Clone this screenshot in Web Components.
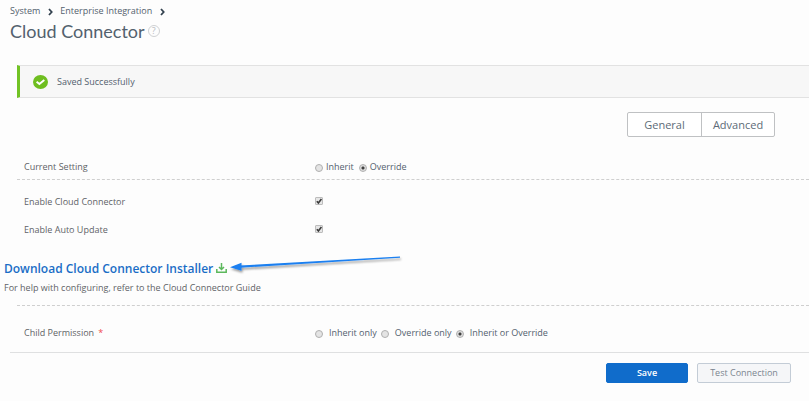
<!DOCTYPE html>
<html lang="en">
<head>
<meta charset="utf-8">
<title>Cloud Connector</title>
<style>
  body {
    margin: 0;
    background: #fdfdfd;
    color: #5f6367;
    font-family: "Open Sans", "Noto Sans", sans-serif;
    font-size: 9px;
    line-height: 12px;
  }
</style>
</head>
<body>
<connector-page></connector-page>

<script>
const crumbTemplate = document.createElement("template");
crumbTemplate.innerHTML = `
  <style>
    :host {
      display: flex;
      align-items: center;
      gap: 8px;
    }
    a {
      color: #53616e;
      text-decoration: none;
    }
    svg {
      display: block;
      margin-top: 2px;
    }
  </style>
  <a href="#"><slot></slot></a>
  <svg width="5" height="8" viewBox="0 0 5 8"><path d="M1 1l2.7 3L1 7" fill="none" stroke="#33424f" stroke-width="1.8"/></svg>
`;

class NavCrumb extends HTMLElement {
  constructor() {
    super();
    this.attachShadow({ mode: "open" });
    this.shadowRoot.appendChild(crumbTemplate.content.cloneNode(true));
  }
}

const bannerTemplate = document.createElement("template");
bannerTemplate.innerHTML = `
  <style>
    :host {
      display: flex;
      align-items: center;
      gap: 9px;
      box-sizing: border-box;
      height: 33px;
      padding-left: 13px;
      background: #f7f7f7;
      border: solid #e2e2e2;
      border-width: 1px 0;
      border-left: 3px solid #72c325;
      color: #53616e;
    }
    svg {
      display: block;
    }
  </style>
  <svg width="15" height="14" viewBox="0 0 15 14">
    <ellipse cx="7.5" cy="7" rx="7.5" ry="7" fill="#6fbe20"/>
    <path d="M3.6 6.7l2.8 2.3 4.9-4.1" fill="none" stroke="#fff" stroke-width="1.9"/>
  </svg>
  <span role="status"><slot></slot></span>
`;

class StatusBanner extends HTMLElement {
  constructor() {
    super();
    this.attachShadow({ mode: "open" });
    this.shadowRoot.appendChild(bannerTemplate.content.cloneNode(true));
  }
}

const tabsTemplate = document.createElement("template");
tabsTemplate.innerHTML = `
  <style>
    :host {
      display: flex;
      border: 1px solid #bfc1c3;
      border-radius: 2px;
      background: #fff;
    }
    button {
      all: unset;
      box-sizing: border-box;
      width: 73px;
      height: 23px;
      color: #5d6b77;
      font-size: 11px;
      line-height: 23px;
      text-align: center;
      cursor: pointer;
    }
    button + button {
      border-left: 1px solid #bfc1c3;
    }
  </style>
`;

class TabSwitch extends HTMLElement {
  constructor() {
    super();
    this.attachShadow({ mode: "open" });
    this.shadowRoot.appendChild(tabsTemplate.content.cloneNode(true));
    this.tabs.forEach((name) => {
      const button = document.createElement("button");
      button.type = "button";
      button.textContent = name;
      this.shadowRoot.appendChild(button);
    });
  }

  get tabs() {
    return this.getAttribute("tabs").split(",");
  }
}

const rowTemplate = document.createElement("template");
rowTemplate.innerHTML = `
  <style>
    :host {
      display: grid;
      grid-template-columns: 291px 1fr;
      align-items: center;
      height: var(--row-height, 28px);
      padding-left: 7px;
    }
    .required {
      color: #f0484e;
      margin-left: 4px;
    }
  </style>
  <span><label for="first"></label><span class="required">*</span></span>
`;

/**
 * Base for the rows of the form: a label and its controls
 */
class FormRow extends HTMLElement {
  constructor() {
    super();
    this.attachShadow({ mode: "open" });
    this.shadowRoot.appendChild(rowTemplate.content.cloneNode(true));
    this.shadowRoot.querySelector("label").textContent = this.getAttribute("label");
    if (!this.hasAttribute("required")) {
      this.shadowRoot.querySelector(".required").remove();
    }
  }
}

const checkTemplate = document.createElement("template");
checkTemplate.innerHTML = `
  <style>
    .box {
      display: grid;
      width: 8px;
      height: 8px;
      margin-bottom: 2px;
    }
    input, svg {
      grid-area: 1 / 1;
    }
    input {
      appearance: none;
      box-sizing: border-box;
      width: 8px;
      height: 8px;
      margin: 0;
      border: 1px solid #bcbcbc;
      border-radius: 1px;
      background: #e6e6e6;
    }
    svg {
      pointer-events: none;
      visibility: hidden;
    }
    input:checked + svg {
      visibility: visible;
    }
  </style>
  <span class="box">
    <input type="checkbox" id="first" checked>
    <svg width="8" height="8" viewBox="0 0 8 8"><path d="M1.8 4.2l1.6 1.7 3-4" fill="none" stroke="#3c3c3c" stroke-width="1.6"/></svg>
  </span>
`;

class CheckRow extends FormRow {
  constructor() {
    super();
    this.shadowRoot.appendChild(checkTemplate.content.cloneNode(true));
  }
}

const radioTemplate = document.createElement("template");
radioTemplate.innerHTML = `
  <style>
    .options {
      display: flex;
      gap: var(--option-gap, 5px);
    }
    .options label {
      display: flex;
      align-items: center;
      gap: var(--radio-gap, 3px);
      color: #53616e;
    }
    input {
      appearance: none;
      box-sizing: border-box;
      width: 8px;
      height: 8px;
      margin: 2px 0 0 0;
      border: 1px solid #b0b0b0;
      border-radius: 50%;
      background: #e4e4e4;
    }
    input:checked {
      background: radial-gradient(circle, #3f3f3f 1px, #dcdcdc 2px);
    }
  </style>
  <div class="options"></div>
`;

class RadioRow extends FormRow {
  constructor() {
    super();
    this.shadowRoot.appendChild(radioTemplate.content.cloneNode(true));
    this.initializeOptions();
  }

  initializeOptions() {
    const optionsEle = this.shadowRoot.querySelector(".options");
    this.options.forEach((option, index) => {
      const label = document.createElement("label");
      const input = document.createElement("input");
      input.type = "radio";
      input.name = "choice";
      input.checked = option === this.getAttribute("value");
      if (index === 0) {
        input.id = "first";
      }
      label.append(input, option);
      optionsEle.appendChild(label);
    });
  }

  get options() {
    return this.getAttribute("options").split(",");
  }
}

const downloadTemplate = document.createElement("template");
downloadTemplate.innerHTML = `
  <style>
    :host {
      display: block;
    }
    .line {
      display: flex;
      align-items: center;
      height: 22px;
    }
    a {
      display: flex;
      align-items: center;
      gap: 3px;
      color: #1a6dc6;
      font-size: 12px;
      font-weight: 600;
      line-height: 16px;
      text-decoration: none;
    }
    svg {
      display: block;
    }
    .pointer {
      margin-left: 3px;
      overflow: visible;
    }
    p {
      margin: 2px 0 0;
    }
  </style>
  <div class="line">
    <a href="#"><slot></slot>
      <svg width="11" height="12" viewBox="0 0 11 12"><path d="M5.5 0v6M3 4l2.5 2.5L8 4M.8 6v3.2h9.4V6" fill="none" stroke="#5cb85c" stroke-width="1.5"/></svg>
    </a>
    <svg class="pointer" width="174" height="22" viewBox="0 2 174 22" aria-hidden="true">
      <defs><filter id="shade" x="-5%" y="-40%" width="110%" height="200%"><feDropShadow dx="1" dy="2" stdDeviation="1" flood-color="#000" flood-opacity=".4"/></filter></defs>
      <g filter="url(#shade)" fill="#1a7ff0">
        <path d="M10 9.6L170 0.4v1.4L10 11.7z"/>
        <path d="M0 11.3l11.5-4.6v8z"/>
      </g>
    </svg>
  </div>
  <p><slot name="help"></slot></p>
`;

class DownloadLink extends HTMLElement {
  constructor() {
    super();
    this.attachShadow({ mode: "open" });
    this.shadowRoot.appendChild(downloadTemplate.content.cloneNode(true));
  }
}

const actionTemplate = document.createElement("template");
actionTemplate.innerHTML = `
  <style>
    :host {
      display: block;
    }
    button {
      box-sizing: border-box;
      width: 94px;
      height: 20px;
      padding: 0;
      border: 1px solid #c3ccd6;
      border-radius: 2px;
      background: #f5f6f8;
      color: #7b858f;
      font: inherit;
    }
    :host([primary]) button {
      width: 82px;
      border-color: #106ccb;
      background: #106ccb;
      color: #fff;
      font-weight: 600;
    }
  </style>
  <button type="button"><slot></slot></button>
`;

class ActionButton extends HTMLElement {
  constructor() {
    super();
    this.attachShadow({ mode: "open" });
    this.shadowRoot.appendChild(actionTemplate.content.cloneNode(true));
  }
}

const pageTemplate = document.createElement("template");
pageTemplate.innerHTML = `
  <style>
    :host {
      display: block;
    }
    header {
      padding: 5px 10px 0;
    }
    nav {
      display: flex;
      gap: 7px;
    }
    .title {
      display: flex;
      align-items: center;
      gap: 3px;
      height: 28px;
      margin-bottom: 20px;
    }
    h1 {
      margin: 0;
      color: #53616e;
      font-family: Lato, "Open Sans", sans-serif;
      font-size: 18px;
      font-weight: 400;
      line-height: 28px;
    }
    .help {
      box-sizing: border-box;
      width: 12px;
      height: 12px;
      padding: 0;
      border: 1px solid #cfd1d3;
      border-radius: 50%;
      background: none;
      color: #b9bcbf;
      font: inherit;
      line-height: 10px;
    }
    .panel {
      margin-left: 17px;
    }
    .tabs {
      display: flex;
      justify-content: flex-end;
      padding: 14px 34px 18px 0;
    }
    .current {
      --row-height: 24px;
    }
    .settings {
      padding: 8px 0;
      border-top: 1px dashed #cfcfcf;
    }
    download-link {
      padding: 6px 0 11px 4px;
    }
    .permission {
      padding: 13px 0 5px;
      border-top: 1px dashed #cfcfcf;
      --option-gap: 4px;
      --radio-gap: 6px;
    }
    footer {
      display: flex;
      justify-content: flex-end;
      gap: 9px;
      margin-left: 10px;
      padding: 10px 18px 18px 0;
      border-top: 1px solid #dfe0e1;
    }
  </style>
  <header>
    <nav>
      <nav-crumb>System</nav-crumb>
      <nav-crumb>Enterprise Integration</nav-crumb>
    </nav>
    <div class="title">
      <h1>Cloud Connector</h1>
      <button class="help" type="button">?</button>
    </div>
  </header>
  <main>
    <div class="panel">
      <status-banner>Saved Successfully</status-banner>
      <div class="tabs"><tab-switch tabs="General,Advanced"></tab-switch></div>
      <radio-row class="current" label="Current Setting" options="Inherit,Override" value="Override"></radio-row>
      <div class="settings">
        <check-row label="Enable Cloud Connector"></check-row>
        <check-row label="Enable Auto Update"></check-row>
      </div>
    </div>
    <download-link>
      Download Cloud Connector Installer
      <span slot="help">For help with configuring, refer to the Cloud Connector Guide</span>
    </download-link>
    <div class="panel permission">
      <radio-row label="Child Permission" required options="Inherit only,Override only,Inherit or Override" value="Inherit or Override"></radio-row>
    </div>
  </main>
  <footer>
    <action-button primary>Save</action-button>
    <action-button>Test Connection</action-button>
  </footer>
`;

class ConnectorPage extends HTMLElement {
  constructor() {
    super();
    this.attachShadow({ mode: "open" });
    this.shadowRoot.appendChild(pageTemplate.content.cloneNode(true));
  }
}

window.customElements.define("nav-crumb", NavCrumb);
window.customElements.define("status-banner", StatusBanner);
window.customElements.define("tab-switch", TabSwitch);
window.customElements.define("check-row", CheckRow);
window.customElements.define("radio-row", RadioRow);
window.customElements.define("download-link", DownloadLink);
window.customElements.define("action-button", ActionButton);
window.customElements.define("connector-page", ConnectorPage);
</script>
</body>
</html>
